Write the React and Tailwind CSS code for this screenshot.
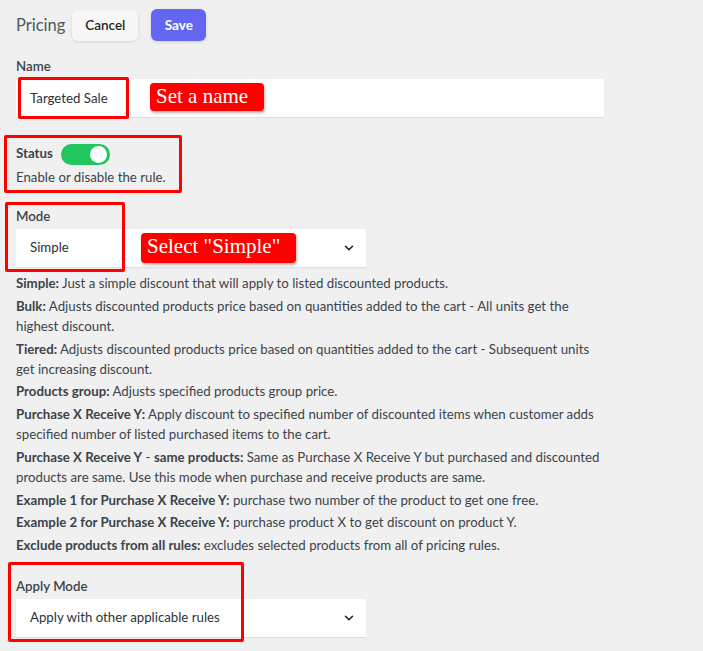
import React from "react";

function Chevron() {
  return (
    <svg width="14" height="14" viewBox="0 0 24 24" fill="none" stroke="#1e1e1e" strokeWidth="2.6" strokeLinecap="round" strokeLinejoin="round">
      <path d="M6 9l6 6 6-6" />
    </svg>
  );
}

function Desc({ b, t }) {
  return (
    <p className="leading-[20px] mb-[2.75px]">
      <span className="font-bold">{b}</span> {t}
    </p>
  );
}

export default function App() {
  const font = { fontFamily: 'Lato, "Noto Sans", sans-serif' };
  return (
    <div className="relative min-h-[651px] w-[703px] bg-[#f0f0f0] text-[#3c434a] text-[13.25px] overflow-hidden" style={font}>
      <div className="pl-4 pt-[9px]">
        <div className="flex items-center h-[32px]">
          <span className="text-[16.5px] text-[#50575e] mr-[7px]">Pricing</span>
          <button className="h-[31px] w-[66px] rounded-md bg-[#f7f7f7] text-[#1e1e1e] font-semibold text-[13.5px] shadow-[0_1px_3px_rgba(0,0,0,0.12)]">Cancel</button>
          <button className="ml-[13px] h-[32px] w-[55px] rounded-md bg-[#6366f1] text-white font-bold text-[13.5px] shadow-[0_1px_3px_rgba(0,0,0,0.15)]">Save</button>
        </div>

        <div className="mt-[16px] font-semibold text-[#3c434a] leading-[18px]">Name</div>
        <div className="mt-[4px] w-[588px] h-[38px] bg-white flex items-center pl-[14px] pt-[1px] shadow-[0_1px_1px_rgba(0,0,0,0.08)] text-[#2c3338]">Targeted Sale</div>

        <div className="mt-[26px] flex items-center h-[22px]">
          <span className="font-bold text-[#3c434a]">Status</span>
          <span className="ml-[8px] w-[49px] h-[21px] rounded-full bg-[#22c55e] relative inline-block">
            <span className="absolute right-[3px] top-[2px] w-[17px] h-[17px] rounded-full bg-white"></span>
          </span>
        </div>
        <div className="mt-[2px] leading-[20px]">Enable or disable the rule.</div>

        <div className="mt-[20px] font-semibold leading-[18px]">Mode</div>
        <div className="mt-[4px] w-[350px] h-[38px] bg-white flex items-center justify-between pl-[14px] pr-[10px] shadow-[0_1px_1px_rgba(0,0,0,0.08)] text-[#2c3338]">
          <span>Simple</span>
          <Chevron />
        </div>

        <div className="mt-[6px] w-[592px] text-[#3c434a]">
          <Desc b="Simple:" t="Just a simple discount that will apply to listed discounted products." />
          <Desc b="Bulk:" t="Adjusts discounted products price based on quantities added to the cart - All units get the highest discount." />
          <Desc b="Tiered:" t="Adjusts discounted products price based on quantities added to the cart - Subsequent units get increasing discount." />
          <Desc b="Products group:" t="Adjusts specified products group price." />
          <Desc b="Purchase X Receive Y:" t="Apply discount to specified number of discounted items when customer adds specified number of listed purchased items to the cart." />
          <p className="leading-[20px] mb-[2.75px]">
            <span className="font-bold">Purchase X Receive Y</span> - <span className="font-bold">same products:</span> Same as Purchase X Receive Y but purchased and discounted products are same. Use this mode when purchase and receive products are same.
          </p>
          <Desc b="Example 1 for Purchase X Receive Y:" t="purchase two number of the product to get one free." />
          <Desc b="Example 2 for Purchase X Receive Y:" t="purchase product X to get discount on product Y." />
          <Desc b="Exclude products from all rules:" t="excludes selected products from all of pricing rules." />
        </div>

        <div className="mt-[22px] font-semibold leading-[18px]">Apply Mode</div>
        <div className="mt-[4px] w-[350px] h-[38px] bg-white flex items-center justify-between pl-[14px] pr-[10px] shadow-[0_1px_1px_rgba(0,0,0,0.08)] text-[#2c3338]">
          <span>Apply with other applicable rules</span>
          <Chevron />
        </div>
      </div>

      {/* annotation boxes */}
      <div className="absolute left-[18px] top-[77px] w-[111px] h-[42px] border-[3px] border-[#ff0000] rounded-[2px]"></div>
      <div className="absolute left-[4px] top-[135px] w-[178px] h-[58px] border-[3px] border-[#ff0000] rounded-[2px]"></div>
      <div className="absolute left-[5px] top-[202px] w-[120px] h-[70px] border-[3px] border-[#ff0000] rounded-[2px]"></div>
      <div className="absolute left-[8px] top-[562px] w-[236px] h-[80px] border-[3px] border-[#ff0000] rounded-[2px]"></div>

      <div className="absolute left-[150px] top-[83px] w-[114px] h-[28px] bg-[#ff0000] rounded-[4px] text-white text-[21px] leading-[26px] pl-[6px] shadow-[1px_2px_3px_rgba(0,0,0,0.3)]" style={{ fontFamily: '"Liberation Serif", serif' }}>Set a name</div>
      <div className="absolute left-[141px] top-[233px] w-[155px] h-[30px] bg-[#ff0000] rounded-[4px] text-white text-[21px] leading-[26px] pl-[6px] shadow-[1px_2px_3px_rgba(0,0,0,0.3)]" style={{ fontFamily: '"Liberation Serif", serif' }}>Select "Simple"</div>
    </div>
  );
}
